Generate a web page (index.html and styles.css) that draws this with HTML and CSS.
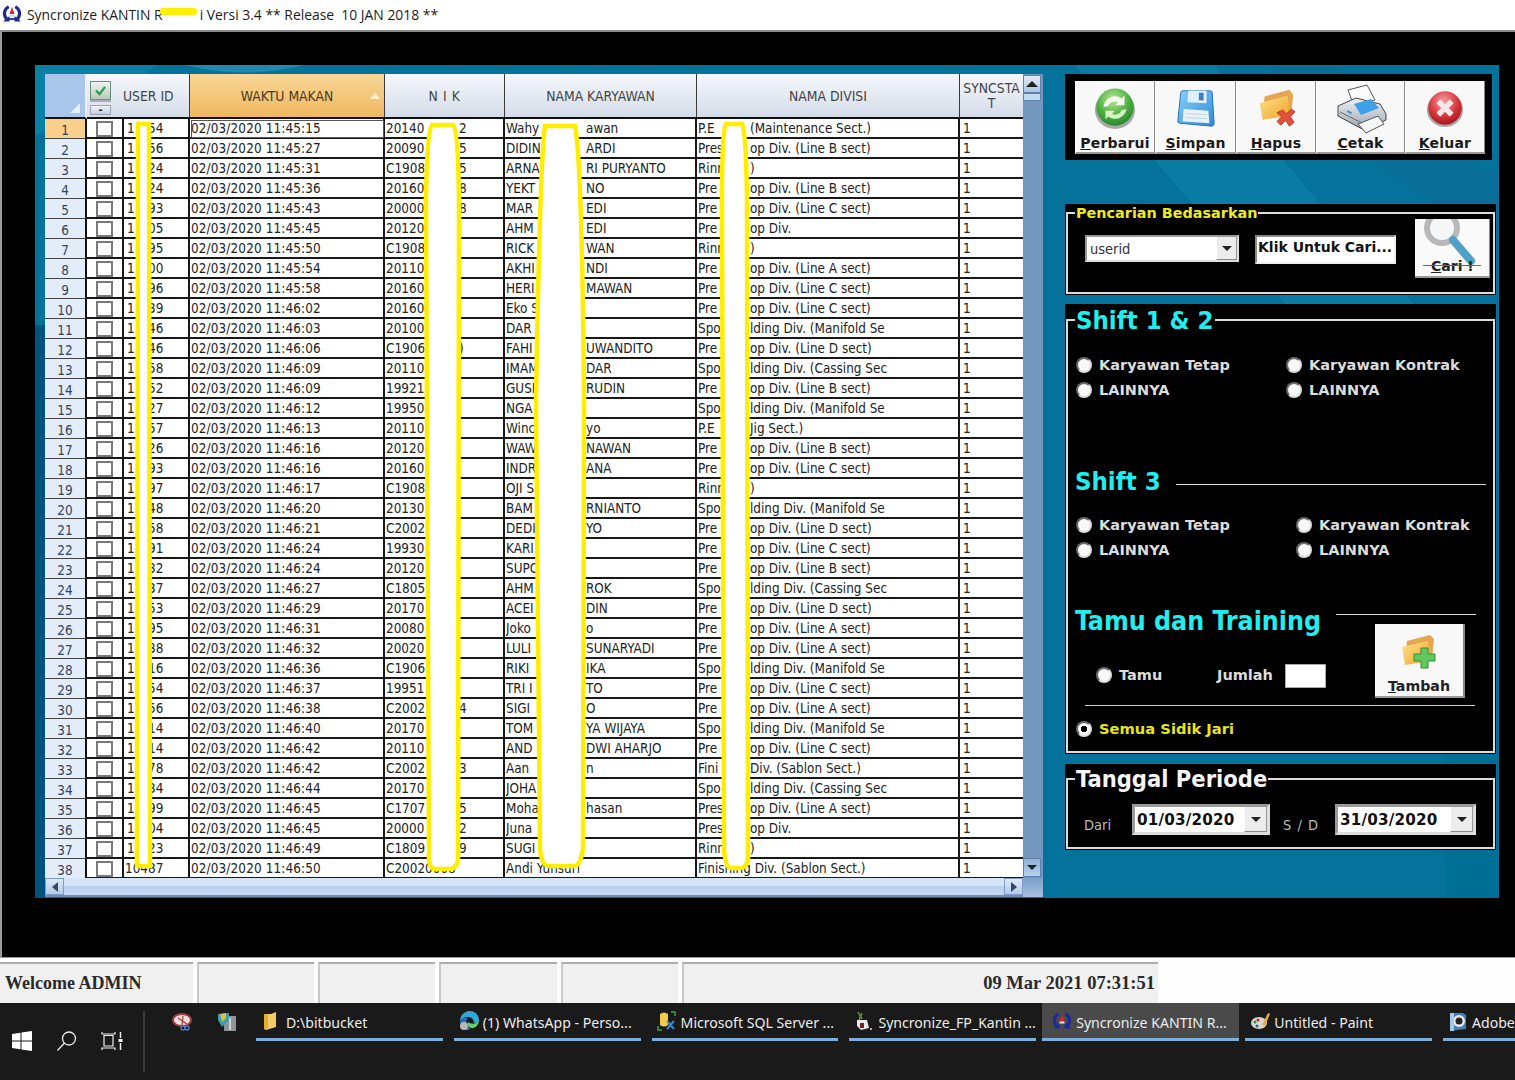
FILE: index.html
```html
<!DOCTYPE html>
<html lang="id">
<head>
<meta charset="utf-8">
<title>Syncronize KANTIN</title>
<link rel="stylesheet" href="styles.css">
</head>
<body>
<header class="titlebar">
  <svg class="appicon" viewBox="0 0 20 20"><path d="M6 1.500A9 9 0 0 0 3 15.500L1.500 17.500H7.500V12L5.800 13.600A6 6 0 0 1 7.500 4Z" fill="#1c2a8c"/><path d="M14 1.500A9 9 0 0 1 17 15.500L18.500 17.500H12.500V12L14.200 13.600A6 6 0 0 0 12.500 4Z" fill="#1c2a8c"/><path d="M10 3L12.500 10H7.500Z" fill="#d6242c"/><rect x="7.500" y="10.500" width="5" height="2" fill="#c9cdea"/><rect x="7" y="14" width="6" height="2" fill="#2a3aa8"/></svg>
  <span class="title-text">Syncronize KANTIN R</span><span class="title-blot"></span><span class="title-text">i Versi 3.4 ** Release&nbsp; 10 JAN 2018 **</span>
</header>

<main class="workspace">
  <section class="panel">
    <svg class="swoosh" viewBox="0 0 1464 833" preserveAspectRatio="none">
      <path d="M1040 0C1140 120 1240 240 1320 300L1380 240C1310 170 1230 80 1180 0Z" fill="#0b7ca4"/>
      <path d="M1230 0C1290 60 1370 130 1464 170V110C1400 80 1340 40 1300 0Z" fill="#0a6f98"/>
      <path d="M0 0H120C70 50 30 60 0 70Z" fill="#0a80a6"/>
      <path d="M150 0C190 10 230 10 270 0Z" fill="#2089ad"/>
      <path d="M1320 300C1380 370 1430 400 1464 410V833H1410C1420 640 1390 430 1320 300Z" fill="#006f96"/>
      <path d="M0 260H10V833H0Z" fill="#00537f"/>
    </svg>

    <div class="grid">
      <div class="sheet">
        <table class="data">
          <colgroup><col class="w1"><col class="w2"><col class="w3"><col class="w4"><col class="w5"><col class="w6"><col class="w7"><col class="w8"></colgroup>
          <thead>
            <tr>
              <th class="corner"><span class="corner-mark"></span></th>
              <th class="head-check">
                <span class="hc-box"><svg viewBox="0 0 14 12" class="hc-tick"><path d="M2 6L6 10L12 2" fill="none" stroke="#22a04a" stroke-width="2.400"/></svg></span>
                <span class="hc-minus">-</span>
              </th>
              <th class="head-user">USER ID</th>
              <th class="head-sorted">WAKTU MAKAN<span class="sort-mark"></span></th>
              <th class="head-spaced">N I K</th>
              <th>NAMA KARYAWAN</th>
              <th>NAMA DIVISI</th>
              <th class="head-sync">SYNCSTA<br>T</th>
            </tr>
          </thead>
          <tbody>
<tr class="current"><th>1</th><td><span class="chk"></span></td><td><span class="ul">1</span>54</td><td class="focus">02/03/2020 11:45:15</td><td><span class="kl">20140</span>2</td><td><span class="nl">Wahy</span>awan</td><td><span class="dl">P.E</span>(Maintenance Sect.)</td><td>1</td></tr>
<tr><th>2</th><td><span class="chk"></span></td><td><span class="ul">1</span>56</td><td>02/03/2020 11:45:27</td><td><span class="kl">20090</span>5</td><td><span class="nl">DIDIN</span>ARDI</td><td><span class="dl">Pres</span>op Div. (Line B sect)</td><td>1</td></tr>
<tr><th>3</th><td><span class="chk"></span></td><td><span class="ul">1</span>24</td><td>02/03/2020 11:45:31</td><td><span class="kl">C1908</span>5</td><td><span class="nl">ARNA</span>RI PURYANTO</td><td><span class="dl">Rinn</span>)</td><td>1</td></tr>
<tr><th>4</th><td><span class="chk"></span></td><td><span class="ul">1</span>24</td><td>02/03/2020 11:45:36</td><td><span class="kl">20160</span>8</td><td><span class="nl">YEKT</span>NO</td><td><span class="dl">Pre</span>op Div. (Line B sect)</td><td>1</td></tr>
<tr><th>5</th><td><span class="chk"></span></td><td><span class="ul">1</span>93</td><td>02/03/2020 11:45:43</td><td><span class="kl">20000</span>8</td><td><span class="nl">MAR</span>EDI</td><td><span class="dl">Pre</span>op Div. (Line C sect)</td><td>1</td></tr>
<tr><th>6</th><td><span class="chk"></span></td><td><span class="ul">1</span>05</td><td>02/03/2020 11:45:45</td><td><span class="kl">20120</span></td><td><span class="nl">AHM</span>EDI</td><td><span class="dl">Pre</span>op Div.</td><td>1</td></tr>
<tr><th>7</th><td><span class="chk"></span></td><td><span class="ul">1</span>95</td><td>02/03/2020 11:45:50</td><td><span class="kl">C1908</span></td><td><span class="nl">RICK</span>WAN</td><td><span class="dl">Rinn</span>)</td><td>1</td></tr>
<tr><th>8</th><td><span class="chk"></span></td><td><span class="ul">1</span>00</td><td>02/03/2020 11:45:54</td><td><span class="kl">20110</span></td><td><span class="nl">AKHI</span>NDI</td><td><span class="dl">Pre</span>op Div. (Line A sect)</td><td>1</td></tr>
<tr><th>9</th><td><span class="chk"></span></td><td><span class="ul">1</span>96</td><td>02/03/2020 11:45:58</td><td><span class="kl">20160</span></td><td><span class="nl">HERI</span>MAWAN</td><td><span class="dl">Pre</span>op Div. (Line C sect)</td><td>1</td></tr>
<tr><th>10</th><td><span class="chk"></span></td><td><span class="ul">1</span>39</td><td>02/03/2020 11:46:02</td><td><span class="kl">20160</span></td><td><span class="nl">Eko S</span></td><td><span class="dl">Pre</span>op Div. (Line C sect)</td><td>1</td></tr>
<tr><th>11</th><td><span class="chk"></span></td><td><span class="ul">1</span>46</td><td>02/03/2020 11:46:03</td><td><span class="kl">20100</span></td><td><span class="nl">DAR</span></td><td><span class="dl">Spo</span>lding Div. (Manifold Se</td><td>1</td></tr>
<tr><th>12</th><td><span class="chk"></span></td><td><span class="ul">1</span>46</td><td>02/03/2020 11:46:06</td><td><span class="kl">C1906</span>)</td><td><span class="nl">FAHI</span>UWANDITO</td><td><span class="dl">Pre</span>op Div. (Line D sect)</td><td>1</td></tr>
<tr><th>13</th><td><span class="chk"></span></td><td><span class="ul">1</span>58</td><td>02/03/2020 11:46:09</td><td><span class="kl">20110</span></td><td><span class="nl">IMAM</span>DAR</td><td><span class="dl">Spo</span>lding Div. (Cassing Sec</td><td>1</td></tr>
<tr><th>14</th><td><span class="chk"></span></td><td><span class="ul">1</span>52</td><td>02/03/2020 11:46:09</td><td><span class="kl">19921</span></td><td><span class="nl">GUSI</span>RUDIN</td><td><span class="dl">Pre</span>op Div. (Line B sect)</td><td>1</td></tr>
<tr><th>15</th><td><span class="chk"></span></td><td><span class="ul">1</span>27</td><td>02/03/2020 11:46:12</td><td><span class="kl">19950</span></td><td><span class="nl">NGA</span></td><td><span class="dl">Spo</span>lding Div. (Manifold Se</td><td>1</td></tr>
<tr><th>16</th><td><span class="chk"></span></td><td><span class="ul">1</span>57</td><td>02/03/2020 11:46:13</td><td><span class="kl">20110</span></td><td><span class="nl">Winc</span>yo</td><td><span class="dl">P.E</span>Jig Sect.)</td><td>1</td></tr>
<tr><th>17</th><td><span class="chk"></span></td><td><span class="ul">1</span>26</td><td>02/03/2020 11:46:16</td><td><span class="kl">20120</span></td><td><span class="nl">WAW</span>NAWAN</td><td><span class="dl">Pre</span>op Div. (Line B sect)</td><td>1</td></tr>
<tr><th>18</th><td><span class="chk"></span></td><td><span class="ul">1</span>93</td><td>02/03/2020 11:46:16</td><td><span class="kl">20160</span></td><td><span class="nl">INDR</span>ANA</td><td><span class="dl">Pre</span>op Div. (Line C sect)</td><td>1</td></tr>
<tr><th>19</th><td><span class="chk"></span></td><td><span class="ul">1</span>97</td><td>02/03/2020 11:46:17</td><td><span class="kl">C1908</span></td><td><span class="nl">OJI S</span></td><td><span class="dl">Rinn</span>)</td><td>1</td></tr>
<tr><th>20</th><td><span class="chk"></span></td><td><span class="ul">1</span>48</td><td>02/03/2020 11:46:20</td><td><span class="kl">20130</span></td><td><span class="nl">BAM</span>RNIANTO</td><td><span class="dl">Spo</span>lding Div. (Manifold Se</td><td>1</td></tr>
<tr><th>21</th><td><span class="chk"></span></td><td><span class="ul">1</span>58</td><td>02/03/2020 11:46:21</td><td><span class="kl">C2002</span></td><td><span class="nl">DEDI</span>YO</td><td><span class="dl">Pre</span>op Div. (Line D sect)</td><td>1</td></tr>
<tr><th>22</th><td><span class="chk"></span></td><td><span class="ul">1</span>91</td><td>02/03/2020 11:46:24</td><td><span class="kl">19930</span></td><td><span class="nl">KARI</span></td><td><span class="dl">Pre</span>op Div. (Line C sect)</td><td>1</td></tr>
<tr><th>23</th><td><span class="chk"></span></td><td><span class="ul">1</span>32</td><td>02/03/2020 11:46:24</td><td><span class="kl">20120</span></td><td><span class="nl">SUPC</span></td><td><span class="dl">Pre</span>op Div. (Line B sect)</td><td>1</td></tr>
<tr><th>24</th><td><span class="chk"></span></td><td><span class="ul">1</span>37</td><td>02/03/2020 11:46:27</td><td><span class="kl">C1805</span></td><td><span class="nl">AHM</span>ROK</td><td><span class="dl">Spo</span>lding Div. (Cassing Sec</td><td>1</td></tr>
<tr><th>25</th><td><span class="chk"></span></td><td><span class="ul">1</span>53</td><td>02/03/2020 11:46:29</td><td><span class="kl">20170</span></td><td><span class="nl">ACEI</span>DIN</td><td><span class="dl">Pre</span>op Div. (Line D sect)</td><td>1</td></tr>
<tr><th>26</th><td><span class="chk"></span></td><td><span class="ul">1</span>95</td><td>02/03/2020 11:46:31</td><td><span class="kl">20080</span></td><td><span class="nl">Joko</span>o</td><td><span class="dl">Pre</span>op Div. (Line A sect)</td><td>1</td></tr>
<tr><th>27</th><td><span class="chk"></span></td><td><span class="ul">1</span>38</td><td>02/03/2020 11:46:32</td><td><span class="kl">20020</span></td><td><span class="nl">LULI</span>SUNARYADI</td><td><span class="dl">Pre</span>op Div. (Line A sect)</td><td>1</td></tr>
<tr><th>28</th><td><span class="chk"></span></td><td><span class="ul">1</span>16</td><td>02/03/2020 11:46:36</td><td><span class="kl">C1906</span></td><td><span class="nl">RIKI</span>IKA</td><td><span class="dl">Spo</span>lding Div. (Manifold Se</td><td>1</td></tr>
<tr><th>29</th><td><span class="chk"></span></td><td><span class="ul">1</span>54</td><td>02/03/2020 11:46:37</td><td><span class="kl">19951</span></td><td><span class="nl">TRI I</span>TO</td><td><span class="dl">Pre</span>op Div. (Line C sect)</td><td>1</td></tr>
<tr><th>30</th><td><span class="chk"></span></td><td><span class="ul">1</span>56</td><td>02/03/2020 11:46:38</td><td><span class="kl">C2002</span>4</td><td><span class="nl">SIGI</span>O</td><td><span class="dl">Pre</span>op Div. (Line A sect)</td><td>1</td></tr>
<tr><th>31</th><td><span class="chk"></span></td><td><span class="ul">1</span>14</td><td>02/03/2020 11:46:40</td><td><span class="kl">20170</span></td><td><span class="nl">TOM</span>YA WIJAYA</td><td><span class="dl">Spo</span>lding Div. (Manifold Se</td><td>1</td></tr>
<tr><th>32</th><td><span class="chk"></span></td><td><span class="ul">1</span>14</td><td>02/03/2020 11:46:42</td><td><span class="kl">20110</span></td><td><span class="nl">AND</span>DWI AHARJO</td><td><span class="dl">Pre</span>op Div. (Line C sect)</td><td>1</td></tr>
<tr><th>33</th><td><span class="chk"></span></td><td><span class="ul">1</span>78</td><td>02/03/2020 11:46:42</td><td><span class="kl">C2002</span>3</td><td><span class="nl">Aan</span>n</td><td><span class="dl">Fini</span>Div. (Sablon Sect.)</td><td>1</td></tr>
<tr><th>34</th><td><span class="chk"></span></td><td><span class="ul">1</span>34</td><td>02/03/2020 11:46:44</td><td><span class="kl">20170</span></td><td><span class="nl">JOHA</span></td><td><span class="dl">Spo</span>lding Div. (Cassing Sec</td><td>1</td></tr>
<tr><th>35</th><td><span class="chk"></span></td><td><span class="ul">1</span>99</td><td>02/03/2020 11:46:45</td><td><span class="kl">C1707</span>5</td><td><span class="nl">Moha</span>hasan</td><td><span class="dl">Pres</span>op Div. (Line A sect)</td><td>1</td></tr>
<tr><th>36</th><td><span class="chk"></span></td><td><span class="ul">1</span>04</td><td>02/03/2020 11:46:45</td><td><span class="kl">20000</span>2</td><td><span class="nl">Juna</span></td><td><span class="dl">Pres</span>op Div.</td><td>1</td></tr>
<tr><th>37</th><td><span class="chk"></span></td><td><span class="ul">1</span>23</td><td>02/03/2020 11:46:49</td><td><span class="kl">C1809</span>9</td><td><span class="nl">SUGI</span></td><td><span class="dl">Rinn</span>)</td><td>1</td></tr>
<tr><th>38</th><td><span class="chk"></span></td><td>10487</td><td>02/03/2020 11:46:50</td><td>C20020008</td><td>Andi Yunsuri</td><td>Finishing Div. (Sablon Sect.)</td><td>1</td></tr>
          </tbody>
        </table>
      </div>
      <div class="vscroll">
        <span class="vbtn"><span class="tri-up"></span></span>
        <span class="vthumb"></span>
        <span class="vspace"></span>
        <span class="vbtn vbtn-down"><span class="tri-down"></span></span>
      </div>
      <div class="hscroll">
        <span class="hbtn"><span class="tri-left"></span></span>
        <span class="hspace"></span>
        <span class="hbtn"><span class="tri-right"></span></span>
      </div>
      <div class="scroll-corner"></div>
      <svg class="masks" viewBox="45 74 978 804">
        <path d="M138 124H149Q150 400 150 866H137Q136 400 138 124Z"/>
        <path d="M432 125H453Q458 128 459 200L458 860Q456 869 450 869H434Q430 868 429 860L426 200Q427 130 432 125Z"/>
        <path d="M545 126H575Q582 160 584 400L583 850Q580 865 575 866H548Q542 865 540 850L536 400Q540 160 545 126Z"/>
        <path d="M726 124H742Q746 130 747 200L748 860Q746 868 740 868H730Q726 868 724 850L722 200Q722 130 726 124Z"/>
      </svg>
    </div>

    <aside class="side">
      <div class="toolbar">
        <button class="tool">
          <svg class="tool-icon" viewBox="0 0 44 44"><defs><radialGradient id="gG" cx=".45" cy=".3" r=".8"><stop offset="0" stop-color="#b8e89a"/><stop offset=".55" stop-color="#4cae3e"/><stop offset="1" stop-color="#1c7a2a"/></radialGradient></defs><ellipse cx="22" cy="24" rx="21" ry="20" fill="#a9a9a9"/><circle cx="22" cy="21" r="19.500" fill="url(#gG)"/><path d="M10 21A12 12 0 0 1 29 12L32 9V19H22L25 16A7 7 0 0 0 15 20Z" fill="#f2fbe9"/><path d="M34 23A12 12 0 0 1 15 31L12 34V25H22L19 28A7 7 0 0 0 29 24Z" fill="#d7f2c6"/></svg>
          <span class="tool-label"><u>P</u>erbarui</span>
        </button>
        <button class="tool">
          <svg class="tool-icon" viewBox="0 0 44 44"><defs><linearGradient id="gB" x1="0" y1="0" x2="1" y2="1"><stop offset="0" stop-color="#8cd0fa"/><stop offset="1" stop-color="#2a8ad8"/></linearGradient></defs><path d="M8 4H37Q39 4 39 6L41 38Q41 41 38 41L5 38Q2 37 3 35L6 6Q6 4 8 4Z" fill="url(#gB)" stroke="#2b6fb0"/><path d="M14 4H33L33 17L13 16Z" fill="#dff1fd"/><rect x="25" y="6" width="5" height="8" fill="#3d7fc0"/><path d="M9 23L35 25L36 38L8 36Z" fill="#e9f3f9"/><path d="M11 28L33 29M11 32L33 33" stroke="#bcd4e6"/></svg>
          <span class="tool-label"><u>S</u>impan</span>
        </button>
        <button class="tool">
          <svg class="tool-icon" viewBox="0 0 44 44"><defs><linearGradient id="gY" x1="0" y1="0" x2="1" y2="1"><stop offset="0" stop-color="#ffe48a"/><stop offset="1" stop-color="#f0a028"/></linearGradient></defs><path d="M10 10L36 3L40 8L38 28L8 34Z" fill="#e4a650"/><path d="M5 17L34 9L37 30L8 34Z" fill="url(#gY)"/><path d="M23 27L29 24L33 28L38 23L42 26L37 31L41 37L36 41L32 35L27 40L23 36L28 31Z" fill="#e0503c" stroke="#a83226" stroke-width=".8"/></svg>
          <span class="tool-label"><u>H</u>apus</span>
        </button>
        <button class="tool">
          <svg class="tool-icon tool-icon-wide" viewBox="0 0 54 50"><defs><linearGradient id="gP" x1="0" y1="0" x2="0" y2="1"><stop offset="0" stop-color="#eef2f6"/><stop offset="1" stop-color="#9aa3ae"/></linearGradient></defs><path d="M14 6L33 1L41 16L20 22Z" fill="#fbfcfd" stroke="#555"/><path d="M4 22L22 14L46 20L52 30L52 36L30 46L4 32Z" fill="url(#gP)" stroke="#444"/><path d="M20 20L37 15L45 24L27 31Z" fill="#3ea0e8"/><path d="M24 40L44 32L50 40L32 49Z" fill="#f5f6f7" stroke="#555"/><path d="M6 28L28 39" stroke="#666"/><rect x="13" y="27" width="5" height="2" fill="#4a90d8" transform="rotate(25 15 28)"/></svg>
          <span class="tool-label"><u>C</u>etak</span>
        </button>
        <button class="tool">
          <svg class="tool-icon" viewBox="0 0 44 44"><defs><radialGradient id="gR" cx=".45" cy=".3" r=".8"><stop offset="0" stop-color="#f7a0a0"/><stop offset=".55" stop-color="#d8333a"/><stop offset="1" stop-color="#8d1018"/></radialGradient></defs><ellipse cx="22" cy="24" rx="19" ry="18" fill="#a9a9a9"/><circle cx="22" cy="22" r="17.500" fill="url(#gR)"/><path d="M14 17L17 14L22 19L27 14L30 17L25 22L30 27L27 30L22 25L17 30L14 27L19 22Z" fill="#f5e8e8" stroke="#f5e8e8" stroke-linejoin="round" stroke-width="1.500"/></svg>
          <span class="tool-label"><u>K</u>eluar</span>
        </button>
      </div>

      <div class="blackbox search-box">
        <fieldset class="frame search-frame">
          <legend class="legend-yellow">Pencarian Bedasarkan</legend>
          <div class="search-row">
            <div class="combo search-combo"><span class="combo-text thin">userid</span><span class="combo-btn"><span class="tri-down"></span></span></div>
            <button class="klik">Klik Untuk Cari...</button>
            <button class="cari">
              <svg class="cari-icon" viewBox="0 0 56 46"><circle cx="21" cy="9" r="15" fill="#f4f6f8" stroke="#b8b8b8" stroke-width="6"/><path d="M32 21L50 42" stroke="#4f9fc6" stroke-width="8" stroke-linecap="round"/></svg>
              <span class="cari-label"><u>C</u>ari !</span>
            </button>
          </div>
        </fieldset>
      </div>

      <div class="blackbox shift-box">
        <fieldset class="frame shift-frame">
          <legend class="legend-cyan">Shift 1 &amp; 2</legend>
          <div class="radios radios-a">
            <label class="opt"><span class="radio"></span>Karyawan Tetap</label>
            <label class="opt"><span class="radio"></span>Karyawan Kontrak</label>
            <label class="opt"><span class="radio"></span>LAINNYA</label>
            <label class="opt"><span class="radio"></span>LAINNYA</label>
          </div>
          <div class="section-head head-shift3">
            <span class="section-title">Shift 3</span><span class="rule rule-shift3"></span>
          </div>
          <div class="radios radios-b">
            <label class="opt"><span class="radio"></span>Karyawan Tetap</label>
            <label class="opt"><span class="radio"></span>Karyawan Kontrak</label>
            <label class="opt"><span class="radio"></span>LAINNYA</label>
            <label class="opt"><span class="radio"></span>LAINNYA</label>
          </div>
          <div class="section-head head-tamu">
            <span class="section-title">Tamu dan Training</span><span class="rule rule-tamu"></span>
          </div>
          <div class="tamu-row">
            <div class="tamu-left">
              <label class="opt opt-tamu"><span class="radio"></span>Tamu</label>
              <span class="jumlah">Jumlah</span>
              <span class="jumlah-input"></span>
            </div>
            <button class="tambah">
              <svg class="tambah-icon" viewBox="0 0 40 38"><defs><linearGradient id="gY2" x1="0" y1="0" x2="1" y2="1"><stop offset="0" stop-color="#ffe48a"/><stop offset="1" stop-color="#f0a028"/></linearGradient></defs><path d="M8 8L31 2L35 6L33 26L6 30Z" fill="#e4a650"/><path d="M3 14L29 8L32 28L6 32Z" fill="url(#gY2)"/><path d="M22 15H29V21H36V28H29V35H22V28H15V21H22Z" fill="#62c85e" stroke="#2f8f3a"/></svg>
              <span class="tambah-label"><u>T</u>ambah</span>
            </button>
          </div>
          <div class="divider"></div>
          <label class="opt opt-semua"><span class="radio radio-on"></span>Semua Sidik Jari</label>
        </fieldset>
      </div>

      <div class="blackbox date-box">
        <fieldset class="frame date-frame">
          <legend class="legend-white">Tanggal Periode</legend>
          <div class="date-row">
            <span class="date-label dari">Dari</span>
            <div class="combo date-combo"><span class="combo-text">01/03/2020</span><span class="combo-btn"><span class="tri-down"></span></span></div>
            <span class="date-label sd">S / D</span>
            <div class="combo date-combo date-combo-b"><span class="combo-text">31/03/2020</span><span class="combo-btn"><span class="tri-down"></span></span></div>
          </div>
        </fieldset>
      </div>
    </aside>
  </section>
</main>

<footer class="statusbar">
  <div class="stat stat-a">Welcome ADMIN</div>
  <div class="stat stat-b"></div>
  <div class="stat stat-b"></div>
  <div class="stat stat-c"></div>
  <div class="stat stat-b"></div>
  <div class="stat stat-d">09 Mar 2021 07:31:51</div>
</footer>

<nav class="taskbar">
  <svg class="tb-start" viewBox="0 0 20 20"><path d="M0 3L8.500 1.800V9.500H0ZM9.500 1.600L20 0V9.500H9.500ZM0 10.500H8.500V18.200L0 17ZM9.500 10.500H20V20L9.500 18.400Z" fill="#fff"/></svg>
  <svg class="tb-search" viewBox="0 0 22 22"><circle cx="13" cy="8.500" r="6.500" fill="none" stroke="#eee" stroke-width="1.300"/><path d="M8.500 13L1.500 20.500" stroke="#eee" stroke-width="1.300"/></svg>
  <svg class="tb-tasks" viewBox="0 0 22 20"><path d="M1 1V3H14V1M3 4.500H12V15H3ZM1 19V17H14V19" fill="none" stroke="#eee" stroke-width="1.200"/><path d="M19.500 1V7M19.500 12V19" stroke="#eee" stroke-width="1.500"/><rect x="17.500" y="8" width="4" height="3" fill="#eee"/></svg>
  <span class="tb-sep"></span>
  <svg class="tb-pin tb-pin-a" viewBox="0 0 20 18"><ellipse cx="10" cy="7" rx="9" ry="6" fill="#e8e2e0" stroke="#a83a3a" stroke-width="2"/><path d="M6 5L15 11M11 3L10 12" stroke="#b03030" stroke-width="1.200"/><circle cx="11" cy="15" r="2" fill="none" stroke="#4a7fc8" stroke-width="1.300"/><circle cx="15" cy="15" r="2" fill="none" stroke="#4a7fc8" stroke-width="1.300"/></svg>
  <svg class="tb-pin tb-pin-b" viewBox="0 0 20 20"><rect x="7" y="4" width="12" height="15" fill="#8f9498"/><path d="M1 2L12 1V8L5 15L1 8Z" fill="#3aa0a8"/><path d="M3 2L9 1V6L5 10Z" fill="#d8c050"/><rect x="12" y="6" width="2" height="12" fill="#d0d4d8"/></svg>
  <div class="tb-item tb-item-first">
    <svg class="tb-icon tb-icon-folder" viewBox="0 0 14 18"><path d="M1 2H8L13 0V15L3 18L1 17Z" fill="#f2cd67"/><path d="M1 2H5V16L1 17Z" fill="#e3ad33"/></svg>
    <span>D:\bitbucket</span>
  </div>
  <div class="tb-item">
    <svg class="tb-icon" viewBox="0 0 20 20"><path d="M1 10C1 4 6 0 11 0C16 0 20 4 20 9C20 11 18 12 15 12C15 8 12 6 9 6C5 6 2 8 1 10Z" fill="#2fa8d8"/><path d="M1 10C2 7 6 6 9 7C6 9 7 15 11 17C12 18 9 20 7 19C3 18 1 14 1 10Z" fill="#1f6fc0"/><path d="M20 9C20 14 16 18 12 17C9 16 8 13 9 11C11 13 18 14 20 9Z" fill="#5fd06a"/><circle cx="5" cy="15" r="4" fill="#b8b8b8"/></svg>
    <span>(1) WhatsApp - Perso...</span>
  </div>
  <div class="tb-item">
    <svg class="tb-icon" viewBox="0 0 20 20"><path d="M3 3Q7 0 11 3V14Q7 17 3 14Z" fill="#f0cc4a"/><path d="M14 1H18V5M1 15V19H5" fill="none" stroke="#3fa04a" stroke-width="1.500"/><path d="M10 10L17 18M17 10L10 18" stroke="#3a88d8" stroke-width="2"/></svg>
    <span>Microsoft SQL Server ...</span>
  </div>
  <div class="tb-item">
    <svg class="tb-icon" viewBox="0 0 20 20"><path d="M4 1L8 8M8 2L5 9" stroke="#5c9a44" stroke-width="1.500"/><path d="M3 9H13L15 17L7 19L3 15Z" fill="#e8e8e8"/><path d="M6 12H10V17H6Z" fill="#802020"/><circle cx="17" cy="18" r="1" fill="#ddd"/></svg>
    <span>Syncronize_FP_Kantin ...</span>
  </div>
  <div class="tb-item tb-item-active">
    <svg class="tb-icon" viewBox="0 0 20 20"><path d="M6 1.500A9 9 0 0 0 3 15.500L1.500 17.500H7.500V12L5.800 13.600A6 6 0 0 1 7.500 4Z" fill="#1c2a9c"/><path d="M14 1.500A9 9 0 0 1 17 15.500L18.500 17.500H12.500V12L14.200 13.600A6 6 0 0 0 12.500 4Z" fill="#1c2a9c"/><path d="M10 3L12.500 10H7.500Z" fill="#d6242c"/><rect x="7.500" y="10.500" width="5" height="2" fill="#e8e8f4"/></svg>
    <span>Syncronize KANTIN R...</span>
  </div>
  <div class="tb-item">
    <svg class="tb-icon" viewBox="0 0 20 20"><ellipse cx="9" cy="12" rx="8" ry="6" fill="#d8d8d0"/><circle cx="5" cy="11" r="1.500" fill="#3a8a3a"/><circle cx="8" cy="9" r="1.500" fill="#c03030"/><circle cx="7" cy="15" r="1.500" fill="#3060b0"/><path d="M12 14L18 2L20 3L15 15Z" fill="#e8a83a"/></svg>
    <span>Untitled - Paint</span>
  </div>
  <div class="tb-item tb-item-last">
    <svg class="tb-icon" viewBox="0 0 20 20"><path d="M2 2H15L18 4V18L2 20Z" fill="#3f7fc0"/><circle cx="11" cy="10" r="6" fill="#e8e8e8"/><circle cx="11" cy="10" r="3.500" fill="#222"/><path d="M2 2H6V20H2Z" fill="#a8c8e8"/></svg>
    <span>Adobe</span>
  </div>
</nav>
</body>
</html>
```

FILE: styles.css
```css
* { box-sizing: border-box; }
html, body { margin: 0; padding: 0; }
body {
  width: 1515px;
  height: 1080px;
  overflow: hidden;
  display: flex;
  flex-direction: column;
  background: #000;
  font-family: "Noto Sans", sans-serif;
}
button { font: inherit; padding: 0; margin: 0; }

/* title bar */
.titlebar {
  height: 30px;
  flex: none;
  background: #fff;
  display: flex;
  align-items: center;
  padding: 0 0 2px 2px;
  color: #1c1c1c;
  font-family: "Open Sans", sans-serif;
  font-size: 13.9px;
  white-space: pre;
}
.appicon { width: 20px; height: 20px; margin-right: 5px; }
.title-blot { width: 37px; height: 7px; margin: -6px 3px 0 -3px; background: #ffee00; border-radius: 3px; }

/* workspace */
.workspace {
  flex: none;
  height: 928px;
  background: #000;
  border-top: 2px solid #8a8a8a;
  border-left: 2px solid #9a9a9a;
  border-bottom: 1px solid #999;
  padding: 33px 16px 0 33px;
}
.panel {
  position: relative;
  width: 1464px;
  height: 833px;
  background: #05729b;
  display: flex;
  align-items: flex-start;
  padding: 9px 0 0 10px;
}
.swoosh { position: absolute; left: 0; top: 0; width: 100%; height: 100%; }

/* data grid */
.grid {
  position: relative;
  width: 998px;
  height: 823px;
  flex: none;
  display: grid;
  grid-template-columns: 978px 20px;
  grid-template-rows: 804px 19px;
}
.sheet { overflow: hidden; background: #fff; }
.data {
  table-layout: fixed;
  width: 978px;
  border-collapse: separate;
  border-spacing: 0;
  font-family: "DejaVu Sans Condensed", "DejaVu Sans", sans-serif;
  font-stretch: condensed;
  font-size: 13.4px;
  color: #222;
}
.w1 { width: 42px; } .w2 { width: 37px; } .w3 { width: 66px; } .w4 { width: 195px; }
.w5 { width: 120px; } .w6 { width: 192px; } .w7 { width: 263px; } .w8 { width: 63px; }

.data thead th {
  height: 45px;
  padding: 0;
  background: linear-gradient(#f5f8fc, #d4dce9);
  border-right: 1px solid #3a3a3a;
  border-bottom: 2px solid #111;
  font-weight: normal;
  font-size: 13.8px;
  color: #444;
  text-align: center;
  position: relative;
}
.data thead .corner { background: #a9c5ea; border-right: 2px solid #eef; }
.corner-mark {
  position: absolute; right: 5px; bottom: 4px;
  border-style: solid; border-width: 0 0 10px 10px;
  border-color: transparent transparent #e6eff9 transparent;
}
.data thead .head-check { border-right: 0; }
.hc-box {
  position: absolute; left: 3px; top: 7px;
  width: 21px; height: 19px;
  background: linear-gradient(#f0f4f0, #b7c9bb);
  border: 1px solid #6f8f80;
  box-shadow: 0 2px 0 #aab;
  display: flex; align-items: center; justify-content: center;
}
.hc-tick { width: 13px; height: 11px; }
.hc-minus {
  position: absolute; left: 3px; top: 31px;
  width: 21px; height: 10px;
  background: linear-gradient(#f2f4f8, #c5cede);
  border: 1px solid #98a4b8;
  line-height: 7px; font-size: 11px; color: #222; font-weight: bold;
}
.data thead .head-user { text-align: left; text-indent: -1px; }
.data thead .head-sorted { background: linear-gradient(#f9d696, #efb860); color: #4a3a20; }
.sort-mark {
  position: absolute; right: 4px; top: 18px;
  border-style: solid; border-width: 0 5px 7px 5px;
  border-color: transparent transparent #fbeecf transparent;
}
.data thead .head-spaced { letter-spacing: .6px; }
.data thead .head-sync { border-right: 0; line-height: 15px; padding-top: 1px; }

.data tbody th {
  height: 20px;
  padding: 4px 0 0;
  font-weight: normal;
  text-align: center;
  background: #e3edf9;
  color: #33445a;
  border-right: 2px solid #111;
  border-bottom: 1px solid #444;
  line-height: 14px;
}
.data tbody td {
  height: 20px;
  padding: 2px 0 0 1px;
  background: #fff;
  border-right: 2px solid #181818;
  border-bottom: 2px solid #181818;
  white-space: nowrap;
  overflow: hidden;
  line-height: 16px;
}
.data tbody td:nth-child(2) { padding-top: 1px; }
.data tbody td:nth-child(4) { letter-spacing: .13px; }
.data tbody td:last-child { border-right: 0; padding-left: 3px; }
.data tbody .current th { background: #fbd08d; }
.data tbody td.focus { outline: 1px solid #555; outline-offset: -2px; }
.chk {
  display: block;
  width: 17px; height: 16px;
  margin: 0 0 0 8px;
  border: 2px solid #7a7a7a;
  background: #fff;
}
.ul, .kl, .nl, .dl { display: inline-block; overflow: hidden; vertical-align: top; }
.ul { width: 23px; padding-left: 2px; }
.kl { width: 73px; }
.nl { width: 80px; }
.dl { width: 52px; }

.masks { position: absolute; left: 0; top: 0; width: 978px; height: 804px; pointer-events: none; }
.masks path { fill: #fff; stroke: #ffee00; stroke-width: 4.5; }

/* scrollbars */
.vscroll {
  background: #7497c0;
  display: flex;
  flex-direction: column;
}
.vbtn {
  height: 18px; width: 18px;
  margin-top: 1px;
  background: linear-gradient(#e6eef8, #a9c3e6);
  border: 1px solid #5f82ad;
  display: flex; align-items: center; justify-content: center;
  flex: none;
}
.vbtn-down { background: linear-gradient(#8fb0d8, #b7cfee); height: 19px; margin: 0 0 1px; }
.vthumb { width: 18px; height: 8px; background: #c7d9f0; border: 1px solid #5f82ad; flex: none; }
.vspace { flex: 1; }
.hscroll {
  display: flex;
  background: linear-gradient(#d8e6f8 0, #d3e2f6 45%, #b9cfee 50%, #c5d8f3 100%);
  border-bottom: 2px solid #6f8db5;
}
.hbtn {
  width: 19px;
  background: linear-gradient(#dce8f8, #b4cbea);
  border: 1px solid #7d9bc4;
  display: flex; align-items: center; justify-content: center;
  flex: none;
}
.hspace { flex: 1; }
.scroll-corner { background: linear-gradient(#7c9fc9, #a8c0e2); }
.tri-up { border-style: solid; border-width: 0 6px 6px 6px; border-color: transparent transparent #222 transparent; }
.tri-down { border-style: solid; border-width: 5px 5px 0 5px; border-color: #222 transparent transparent transparent; }
.tri-left { border-style: solid; border-width: 5px 6px 5px 0; border-color: transparent #33485f transparent transparent; }
.tri-right { border-style: solid; border-width: 5px 0 5px 6px; border-color: transparent transparent transparent #33485f; }

/* right column */
.side {
  position: relative;
  width: 431px;
  margin-left: 22px;
  flex: none;
  display: flex;
  flex-direction: column;
  font-family: "DejaVu Sans", sans-serif;
  font-weight: bold;
}
.toolbar {
  width: 427px;
  height: 86px;
  background: #000;
  padding: 7px 7px 6px 10px;
  display: grid;
  grid-template-columns: 80px 81px 80px 89px 80px;
}
.tool {
  height: 73px;
  background: #f8f8f8;
  border: 0;
  border-right: 1px solid #8a8a8a;
  border-bottom: 2px solid #999;
  border-left: 1px solid #fff;
  display: flex;
  flex-direction: column;
  align-items: center;
  padding-top: 6px;
  font-family: "DejaVu Sans", sans-serif;
  font-weight: bold;
  color: #1a1a1a;
}
.tool-icon { width: 42px; height: 42px; flex: none; }
.tool-icon-wide { width: 54px; height: 50px; margin-top: -3px; margin-bottom: -5px; }
.tool-label { font-size: 14px; line-height: 16px; margin-top: 6px; letter-spacing: .2px; }

.blackbox { background: #000; flex: none; padding: 0 1px 1px; }
.frame {
  margin: 0;
  min-width: 0;
  padding: 0;
  height: 100%;
  border: 2px solid #dcdcdc;
}
.frame legend { margin-left: 7px; padding: 0 1px; display: block; }
.legend-yellow { color: #eded1e; font-size: 14.4px; line-height: 18px; }
.legend-cyan { color: #1fefef; font-family: "DejaVu Sans Condensed", "DejaVu Sans", sans-serif; font-stretch: condensed; font-size: 25.5px; line-height: 32px; padding-top: 1px; }
.legend-white { color: #f4f4f4; font-family: "DejaVu Sans Condensed", "DejaVu Sans", sans-serif; font-stretch: condensed; font-size: 23.5px; line-height: 30px; padding-top: 1px; }

.search-box { margin-top: 44px; height: 91px; }
.search-row { display: flex; align-items: flex-start; padding-left: 17px; margin-top: -3px; }
.combo {
  background: #fff;
  display: flex;
  align-items: center;
  justify-content: space-between;
  border: 2px solid;
  border-color: #9a9a9a #dedede #dedede #9a9a9a;
  flex: none;
}
.combo-text { color: #111; padding-left: 3px; font-size: 14.5px; }
.combo-text.thin { font-family: "DejaVu Sans Condensed", "DejaVu Sans", sans-serif; font-stretch: condensed; font-weight: normal; font-size: 14.5px; color: #333; }
.combo-btn {
  width: 21px;
  height: 100%;
  background: #ececec;
  border-left: 1px solid #fff;
  border-right: 1px solid #999;
  border-bottom: 1px solid #888;
  display: flex;
  align-items: center;
  justify-content: center;
}
.search-combo { width: 154px; height: 27px; margin-top: 16px; }
.klik {
  width: 141px; height: 29px;
  margin: 16px 0 0 16px;
  background: #fff;
  border: 2px solid;
  border-color: #8a8a8a #eee #eee #8a8a8a;
  font-family: "DejaVu Sans", sans-serif;
  font-weight: bold;
  font-size: 14px;
  color: #111;
  text-align: left;
  padding: 0 0 6px 1px;
  white-space: nowrap;
  overflow: hidden;
}
.cari {
  position: relative;
  width: 75px; height: 59px;
  margin-left: 19px;
  background: #fafafa;
  border: 0;
  border-right: 1px solid #888;
  border-bottom: 2px solid #999;
  font-family: "DejaVu Sans", sans-serif;
  font-weight: bold;
  color: #222;
  overflow: hidden;
}
.cari-icon { position: absolute; left: 6px; top: 0; width: 56px; height: 46px; }
.cari-label { position: absolute; left: 16px; top: 39px; font-size: 14px; line-height: 16px; }
.cari::after { content: ""; position: absolute; left: 8px; right: 8px; top: 46px; height: 1px; background: #666; }

.shift-box { margin-top: 9px; height: 450px; }
.radios { display: grid; padding-left: 8px; }
.radios-a { grid-template-columns: 210px auto; margin-top: 16px; }
.radios-b { grid-template-columns: 220px auto; margin-top: 15px; }
.opt {
  display: flex;
  align-items: center;
  height: 25px;
  color: #dcdcdc;
  font-size: 14.5px;
  white-space: nowrap;
}
.radio {
  width: 16px; height: 16px;
  margin-right: 7px;
  border-radius: 50%;
  flex: none;
  background: #f8f8f8;
  border: 2px solid #6a6a6a;
  border-right-color: #ddd;
  border-bottom-color: #ddd;
}
.radio-on { background: radial-gradient(circle, #000 0 3px, #f8f8f8 3.5px); }
.section-head { display: flex; padding-left: 7px; height: 32px; }
.section-title { color: #1fefef; font-family: "DejaVu Sans Condensed", "DejaVu Sans", sans-serif; font-stretch: condensed; font-size: 26.5px; line-height: 32px; white-space: nowrap; }
.head-shift3 .section-title { font-size: 25.5px; }
.rule { display: block; height: 1px; background: #d8d8d8; }
.head-shift3 { margin-top: 63px; }
.rule-shift3 { width: 310px; margin: 19px 0 0 15px; }
.head-tamu { margin-top: 43px; }
.rule-tamu { width: 140px; margin: 9px 0 0 15px; }
.tamu-row { display: grid; grid-template-columns: 307px 90px; }
.tamu-left { display: flex; align-items: center; padding: 27px 0 0 28px; height: 51px; }
.opt-tamu { width: 121px; margin-top: -2px; }
.jumlah { color: #dcdcdc; font-size: 14.5px; width: 68px; margin-top: -2px; }
.jumlah-input { display: block; width: 41px; height: 24px; background: #fff; border: 1px solid #aaa; }
.tambah {
  width: 90px; height: 74px;
  margin-top: -13px;
  background: #f8f8f8;
  border: 0;
  border-right: 2px solid #888;
  border-bottom: 2px solid #999;
  display: flex;
  flex-direction: column;
  align-items: center;
  padding-top: 9px;
  font-family: "DejaVu Sans", sans-serif;
  font-weight: bold;
  color: #222;
}
.tambah-icon { width: 40px; height: 38px; flex: none; }
.tambah-label { font-size: 14.2px; line-height: 16px; margin-top: 7px; }
.divider { width: 390px; height: 1px; margin: 7px 0 0 17px; background: #d0d0d0; }
.opt-semua { margin: 10px 0 0 8px; color: #e6e61a; font-size: 14.7px; }

.date-box { margin-top: 10px; height: 86px; }
.date-row { display: flex; align-items: flex-start; padding: 10px 0 0 16px; }
.date-label { font-weight: normal; color: #bdbdbd; padding-top: 13px; font-size: 14.5px; font-family: "DejaVu Sans Condensed", "DejaVu Sans", sans-serif; font-stretch: condensed; }
.dari { width: 48px; }
.sd { width: 65px; padding-left: 13px; letter-spacing: 1px; }
.date-combo { width: 138px; height: 31px; border-width: 3px; }
.date-combo-b { width: 141px; }
.date-combo .combo-text { font-size: 15.2px; padding-left: 2px; letter-spacing: .2px; }
.date-combo .combo-btn { width: 23px; }

/* status bar */
.statusbar {
  flex: none;
  height: 45px;
  background: #fdfdfd;
  display: flex;
  gap: 4px;
  padding-top: 4px;
  font-family: "Liberation Serif", serif;
  font-weight: bold;
  color: #2a2a2a;
}
.stat {
  background: #f0f0f0;
  border-top: 2px solid #adadad;
  border-left: 2px solid #c8c8c8;
  display: flex;
  align-items: center;
  font-size: 18px;
}
.stat-a { width: 193px; border-left: 0; padding-left: 5px; }
.stat-b { width: 117px; }
.stat-c { width: 118px; }
.stat-d { width: 476px; justify-content: flex-end; padding-right: 3px; font-size: 18.5px; }

/* task bar */
.taskbar {
  flex: none;
  height: 77px;
  background: #1a1a1a;
  display: flex;
  align-items: flex-start;
  overflow: hidden;
  font-family: "Noto Sans", sans-serif;
  font-size: 14.1px;
  color: #ececec;
}
.tb-start { width: 20px; height: 20px; margin: 28px 0 0 12px; flex: none; }
.tb-search { width: 22px; height: 22px; margin: 27px 0 0 24px; flex: none; }
.tb-tasks { width: 22px; height: 20px; margin: 28px 0 0 23px; flex: none; }
.tb-sep { width: 2px; height: 61px; margin: 8px 0 0 20px; background: #3a3a3a; flex: none; }
.tb-pin { width: 20px; height: 20px; margin-top: 9px; flex: none; }
.tb-pin-a { margin-left: 27px; }
.tb-pin-b { margin-left: 25px; }
.tb-item {
  width: 186.8px;
  height: 38px;
  margin-left: 11px;
  flex: none;
  border-bottom: 3px solid #7cb0da;
  display: flex;
  align-items: center;
  padding: 3px 0 0 5px;
  white-space: nowrap;
}
.tb-icon { width: 20px; height: 20px; margin: -2px 4px 0 0; flex: none; }
.tb-icon-folder { width: 14px; height: 18px; margin: -2px 9px 0 2px; }
.tb-item-first { margin-left: 19px; }
.tb-item-active {
  width: 197px;
  margin: 0 -5px 0 6px;
  padding-left: 10px;
  background: #4a4a4a;
}
.tb-item-last { width: 72px; overflow: hidden; }
```
